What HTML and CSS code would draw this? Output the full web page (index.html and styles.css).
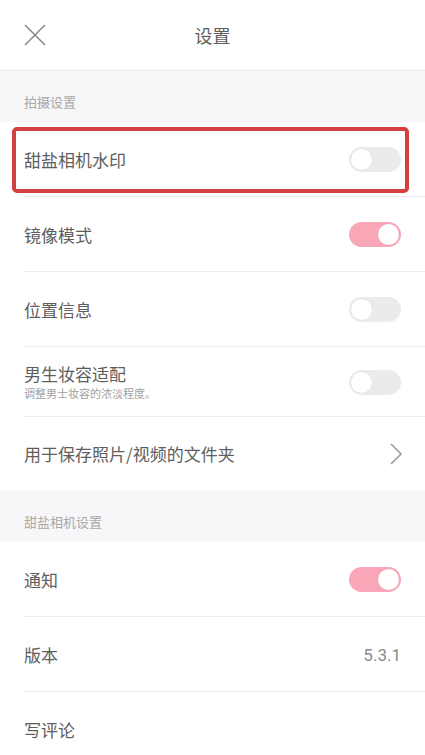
FILE: index.html
```html
<!DOCTYPE html>
<html lang="zh-CN">
<head>
<meta charset="utf-8">
<title>设置</title>
<link rel="stylesheet" href="styles.css">
</head>
<body>
<div class="page">
  <header class="topbar">
    <span class="close">
      <svg width="22" height="22" viewBox="0 0 22 22"><path d="M1 1L21 21M21 1L1 21" stroke="#8a8a8a" stroke-width="1.6" fill="none"/></svg>
    </span>
    <h1 class="title">设置</h1>
  </header>

  <div class="section">拍摄设置</div>
  <div class="row highlighted">
    <span class="label">甜盐相机水印</span>
    <span class="switch"><span class="knob"></span></span>
    <span class="mark"></span>
  </div>
  <div class="row">
    <span class="label">镜像模式</span>
    <span class="switch on"><span class="knob"></span></span>
  </div>
  <div class="row">
    <span class="label">位置信息</span>
    <span class="switch"><span class="knob"></span></span>
  </div>
  <div class="row short">
    <div class="labels">
      <span class="label">男生妆容适配</span>
      <span class="sub">调整男士妆容的浓淡程度。</span>
    </div>
    <span class="switch"><span class="knob"></span></span>
  </div>
  <div class="row last">
    <span class="label">用于保存照片/视频的文件夹</span>
    <svg class="chev" width="14" height="22" viewBox="0 0 14 22"><path d="M2 1L12 11L2 21" stroke="#9a9a9a" stroke-width="1.6" fill="none"/></svg>
  </div>

  <div class="section">甜盐相机设置</div>
  <div class="row">
    <span class="label">通知</span>
    <span class="switch on"><span class="knob"></span></span>
  </div>
  <div class="row">
    <span class="label">版本</span>
    <span class="value">5.3.1</span>
  </div>
  <div class="row">
    <span class="label">写评论</span>
  </div>
</div>
</body>
</html>
```

FILE: styles.css
```css
* { box-sizing: border-box; }
html, body { margin: 0; padding: 0; background: #fff; }
body {
  font-family: "Noto Sans CJK SC", "Noto Sans", Roboto, sans-serif;
  color: #5e5e5e;
  overflow: hidden;
}
.page { width: 425px; }

.topbar {
  height: 71px;
  display: flex;
  align-items: center;
  justify-content: center;
  position: relative;
  border-bottom: 1px solid #e9e9ec;
}
.close {
  position: absolute;
  left: 24px;
  top: 24px;
  width: 22px;
  height: 22px;
  display: block;
}
.close svg { display: block; }
.title {
  margin: 0;
  font-size: 18px;
  font-weight: normal;
  color: #5e5e5e;
  line-height: 1;
}

.section {
  height: 51px;
  background: #f7f7f9;
  padding: 22px 24px 0;
  font-size: 13px;
  color: #a8a8a8;
  line-height: 18px;
}

.row {
  position: relative;
  height: 75px;
  display: flex;
  align-items: center;
  justify-content: space-between;
  padding: 0 24px 0 24px;
}
.row::after {
  content: "";
  position: absolute;
  left: 24px;
  right: 0;
  bottom: 0;
  height: 1px;
  background: #ececee;
}
.row.last::after { display: none; }
.row.short { height: 70px; }
.row.last { height: 74px; }

.label { font-size: 17px; color: #5e5e5e; line-height: 22px; }
.labels { display: flex; flex-direction: column; }
.labels .label { line-height: 22px; }
.sub { font-size: 11px; color: #a0a0a0; line-height: 16px; }

.value { font-size: 17px; color: #8a8a8a; font-family: Roboto, "Noto Sans", sans-serif; }

.switch {
  width: 52px;
  height: 25px;
  border-radius: 13px;
  background: #ebebeb;
  position: relative;
  display: block;
}
.switch .knob {
  position: absolute;
  top: 2px;
  left: 2px;
  width: 21px;
  height: 21px;
  border-radius: 50%;
  background: #fff;
  box-shadow: 0 0 1px rgba(0,0,0,0.12);
}
.switch.on { background: #f9a6b7; }
.switch.on .knob { left: auto; right: 2px; }

.chev { display: block; margin-right: -2px; }

.mark {
  position: absolute;
  left: 12px;
  right: 16px;
  top: 5px;
  bottom: 4px;
  border: 4px solid #d43f40;
  border-radius: 5px;
  pointer-events: none;
}
```
